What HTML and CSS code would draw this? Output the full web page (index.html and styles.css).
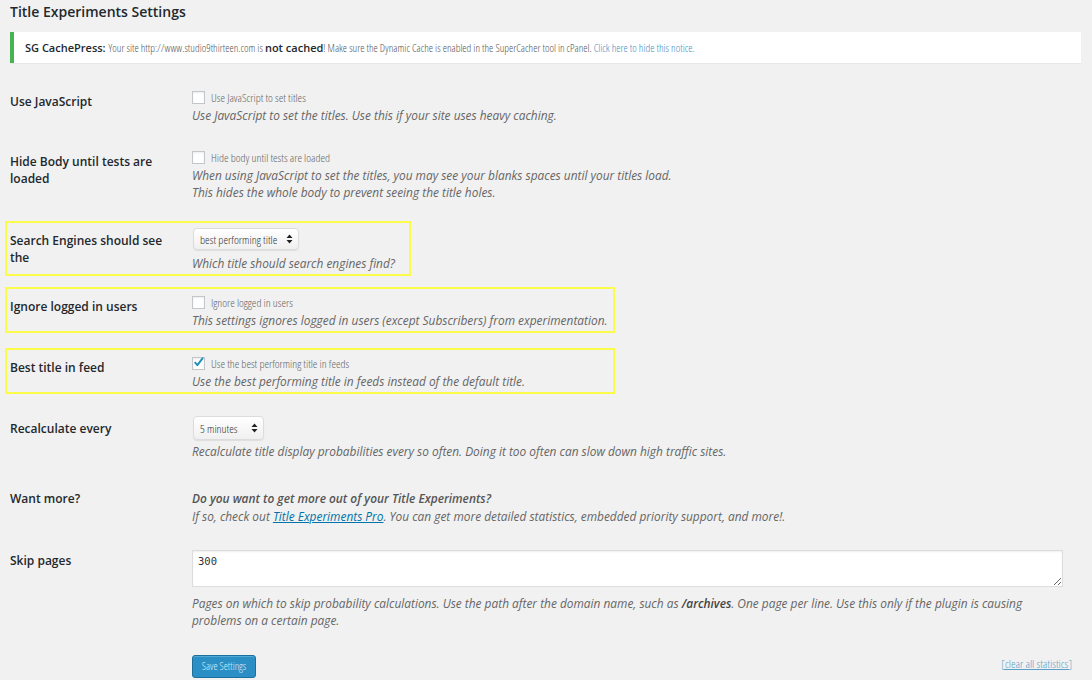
FILE: index.html
```html
<!DOCTYPE html>
<html>
<head>
<meta charset="utf-8">
<link rel="stylesheet" href="styles.css">
</head>
<body>
<div class="wrap">
  <h1 class="page-title">Title Experiments Settings</h1>
  <div class="notice">
    <strong class="notice-brand">SG CachePress:</strong>
    <span class="cond">Your site http://www.studio9thirteen.com is </span><strong class="notice-strong">not cached</strong><span class="cond">! Make sure the Dynamic Cache is enabled in the SuperCacher tool in cPanel. <a class="notice-link" href="#">Click here to hide this notice.</a></span>
  </div>

  <form class="settings">
    <div class="row row-1">
      <div class="row-label">Use JavaScript</div>
      <div class="row-field">
        <label class="check-line"><span class="checkbox"></span><span class="cond">Use JavaScript to set titles</span></label>
        <p class="desc desc-check">Use JavaScript to set the titles. Use this if your site uses heavy caching.</p>
      </div>
    </div>

    <div class="row row-2">
      <div class="row-label">Hide Body until tests are loaded</div>
      <div class="row-field">
        <label class="check-line"><span class="checkbox"></span><span class="cond">Hide body until tests are loaded</span></label>
        <p class="desc desc-check">When using JavaScript to set the titles, you may see your blanks spaces until your titles load.<br>This hides the whole body to prevent seeing the title holes.</p>
      </div>
    </div>

    <div class="row row-3 highlight hl-narrow">
      <div class="row-label">Search Engines should see the</div>
      <div class="row-field">
        <div class="select select-wide"><span class="cond">best performing title</span><svg class="arrows" width="7" height="10" viewBox="0 0 7 10"><path d="M3.5 0.5 L6.5 4 L0.5 4 Z M0.5 6 L6.5 6 L3.5 9.5 Z" fill="#222"/></svg></div>
        <p class="desc">Which title should search engines find?</p>
      </div>
    </div>

    <div class="row row-4 highlight hl-wide">
      <div class="row-label">Ignore logged in users</div>
      <div class="row-field">
        <label class="check-line"><span class="checkbox"></span><span class="cond">Ignore logged in users</span></label>
        <p class="desc desc-check">This settings ignores logged in users (except Subscribers) from experimentation.</p>
      </div>
    </div>

    <div class="row row-5 highlight hl-wide">
      <div class="row-label">Best title in feed</div>
      <div class="row-field">
        <label class="check-line"><span class="checkbox"><svg width="13" height="13" viewBox="0 0 13 13"><path d="M2.6 6.6 L5.2 9.6 L11.2 1.6" fill="none" stroke="#1e8cbe" stroke-width="2.2" stroke-linecap="round" stroke-linejoin="round"/></svg></span><span class="cond">Use the best performing title in feeds</span></label>
        <p class="desc desc-check">Use the best performing title in feeds instead of the default title.</p>
      </div>
    </div>

    <div class="row row-6">
      <div class="row-label row-label-select">Recalculate every</div>
      <div class="row-field">
        <div class="select select-short"><span class="cond">5 minutes</span><svg class="arrows" width="7" height="10" viewBox="0 0 7 10"><path d="M3.5 0.5 L6.5 4 L0.5 4 Z M0.5 6 L6.5 6 L3.5 9.5 Z" fill="#222"/></svg></div>
        <p class="desc">Recalculate title display probabilities every so often. Doing it too often can slow down high traffic sites.</p>
      </div>
    </div>

    <div class="row row-7">
      <div class="row-label row-label-text">Want more?</div>
      <div class="row-field">
        <p class="desc desc-more"><strong>Do you want to get more out of your Title Experiments?</strong><br>If so, check out <a class="pro-link" href="#">Title Experiments Pro</a>. You can get more detailed statistics, embedded priority support, and more!.</p>
      </div>
    </div>

    <div class="row row-8">
      <div class="row-label row-label-area">Skip pages</div>
      <div class="row-field row-field-area">
        <textarea class="pages">300</textarea>
        <p class="desc desc-area">Pages on which to skip probability calculations. Use the path after the domain name, such as <strong>/archives</strong>. One page per line. Use this only if the plugin is causing problems on a certain page.</p>
      </div>
    </div>

    <div class="actions">
      <button type="button" class="btn-primary cond">Save Settings</button>
      <a class="clear-link cond" href="#">[clear all statistics]</a>
    </div>
  </form>
</div>
</body>
</html>
```

FILE: styles.css
```css
html, body {
  margin: 0;
  padding: 0;
  background: #f1f1f1;
}
body {
  font-family: "Open Sans", "DejaVu Sans", sans-serif;
  color: #23282d;
  width: 1092px;
  height: 680px;
  overflow: hidden;
}
.cond {
  font-family: "Open Sans", "Liberation Sans Narrow", sans-serif;
  font-stretch: 75%;
  font-weight: 300;
}
.page-title {
  margin: 0;
  padding: 2px 10px 0;
  font-size: 14px;
  line-height: 20px;
  font-weight: 600;
  color: #23282d;
}
.notice {
  margin: 10px 11px 0 10px;
  height: 31px;
  box-sizing: border-box;
  background: #fff;
  border-left: 4px solid #46b450;
  padding: 0 0 0 11px;
  display: flex;
  align-items: center;
  white-space: pre;
  font-size: 10.8px;
  color: #555;
  box-shadow: 0 1px 1px rgba(0,0,0,0.04);
}
.notice-brand {
  font-size: 11px;
  font-weight: 600;
  color: #23282d;
  margin-right: 3px;
}
.notice-strong {
  font-size: 11px;
  font-weight: 600;
  color: #23282d;
}
.notice-link {
  color: #3b8fc7;
  text-decoration: none;
}
.settings {
  margin: 0 5px;
  display: flex;
  flex-direction: column;
}
.row {
  display: flex;
  border: 2px solid transparent;
  padding: 5px 3px 2px;
}
.row-1 { margin-top: 18.5px; }
.row-2 { margin-top: 14px; }
.row-3 { margin-top: 16.5px; }
.row-4 { margin-top: 11.5px; }
.row-5 { margin-top: 15px; }
.row-6 { margin-top: 15px; }
.row-7 { margin-top: 18px; }
.row-8 { margin-top: 14px; }
.highlight {
  border-color: #fbfb4a;
  align-self: flex-start;
}
.hl-narrow { width: 406px; box-sizing: border-box; }
.hl-wide { width: 610px; box-sizing: border-box; }
.row-label {
  flex: 0 0 166px;
  padding: 4px 16px 0 0;
  font-size: 12px;
  line-height: 17px;
  font-weight: 600;
  color: #23282d;
}
.row-label-select { padding-top: 3.5px; }
.row-label-text { padding-top: 1.5px; }
.row-label-area { padding-top: 2.5px; }
.row-field {
  flex: 1 1 auto;
  min-width: 0;
}
.row-field-area {
  padding-right: 19px;
}
.check-line {
  display: flex;
  align-items: center;
  height: 17px;
  font-size: 11.5px;
  color: #666;
}
.checkbox {
  width: 13px;
  height: 13px;
  box-sizing: border-box;
  border: 1px solid #c4c7ca;
  background: #fff;
  box-shadow: inset 0 1px 2px rgba(0,0,0,0.08);
  margin-right: 6px;
  display: flex;
  align-items: center;
  justify-content: center;
  flex: none;
  overflow: visible;
}
.checkbox svg {
  display: block;
  margin-top: -2px;
}
.desc {
  margin: 0;
  font-size: 11.9px;
  line-height: 17px;
  font-style: italic;
  color: #666;
}
.desc-check { margin-top: 1px; }
.desc-more { line-height: 18px; }
.desc-more strong { color: #555; font-weight: 600; }
.desc-area { margin-top: 8.5px; }
.desc-area strong { color: #444; font-weight: 600; }
.pro-link {
  color: #0073aa;
  text-decoration: underline;
}
.select {
  display: flex;
  align-items: center;
  justify-content: space-between;
  box-sizing: border-box;
  height: 22px;
  margin-left: 1px;
  padding: 0 5px 0 6px;
  background: linear-gradient(#ffffff, #f0f0f0);
  border: 1px solid #dcdcdc;
  border-radius: 4px;
  box-shadow: 0 1px 1px rgba(0,0,0,0.08);
  font-size: 11.7px;
  color: #333;
  margin-bottom: 4.5px;
}
.select-wide { width: 106px; }
.select-short { width: 71px; height: 24px; margin-bottom: 2.5px; }
.arrows { flex: none; }
.pages {
  display: block;
  width: 100%;
  box-sizing: border-box;
  height: 37px;
  margin: 0;
  padding: 3px 5px;
  border: 1px solid #ddd;
  background: #fff;
  box-shadow: inset 0 1px 2px rgba(0,0,0,0.07);
  font-family: "DejaVu Sans Mono", monospace;
  font-size: 10.5px;
  line-height: 14px;
  color: #333;
  resize: vertical;
  outline: none;
}
.actions {
  display: flex;
  justify-content: space-between;
  align-items: center;
  margin-top: 21.5px;
  padding: 0 15px 0 187px;
}
.btn-primary {
  width: 64px;
  height: 23px;
  box-sizing: border-box;
  padding: 0;
  background: #2b8fc6;
  border: 1px solid #1a6f9c;
  border-radius: 3px;
  color: #d9ecf7;
  font-size: 10.5px;
  box-shadow: inset 0 1px 0 rgba(120,200,230,0.5);
}
.clear-link {
  font-size: 11.7px;
  color: #5a9fc8;
  text-decoration: underline;
  margin-top: -7px;
}
```
